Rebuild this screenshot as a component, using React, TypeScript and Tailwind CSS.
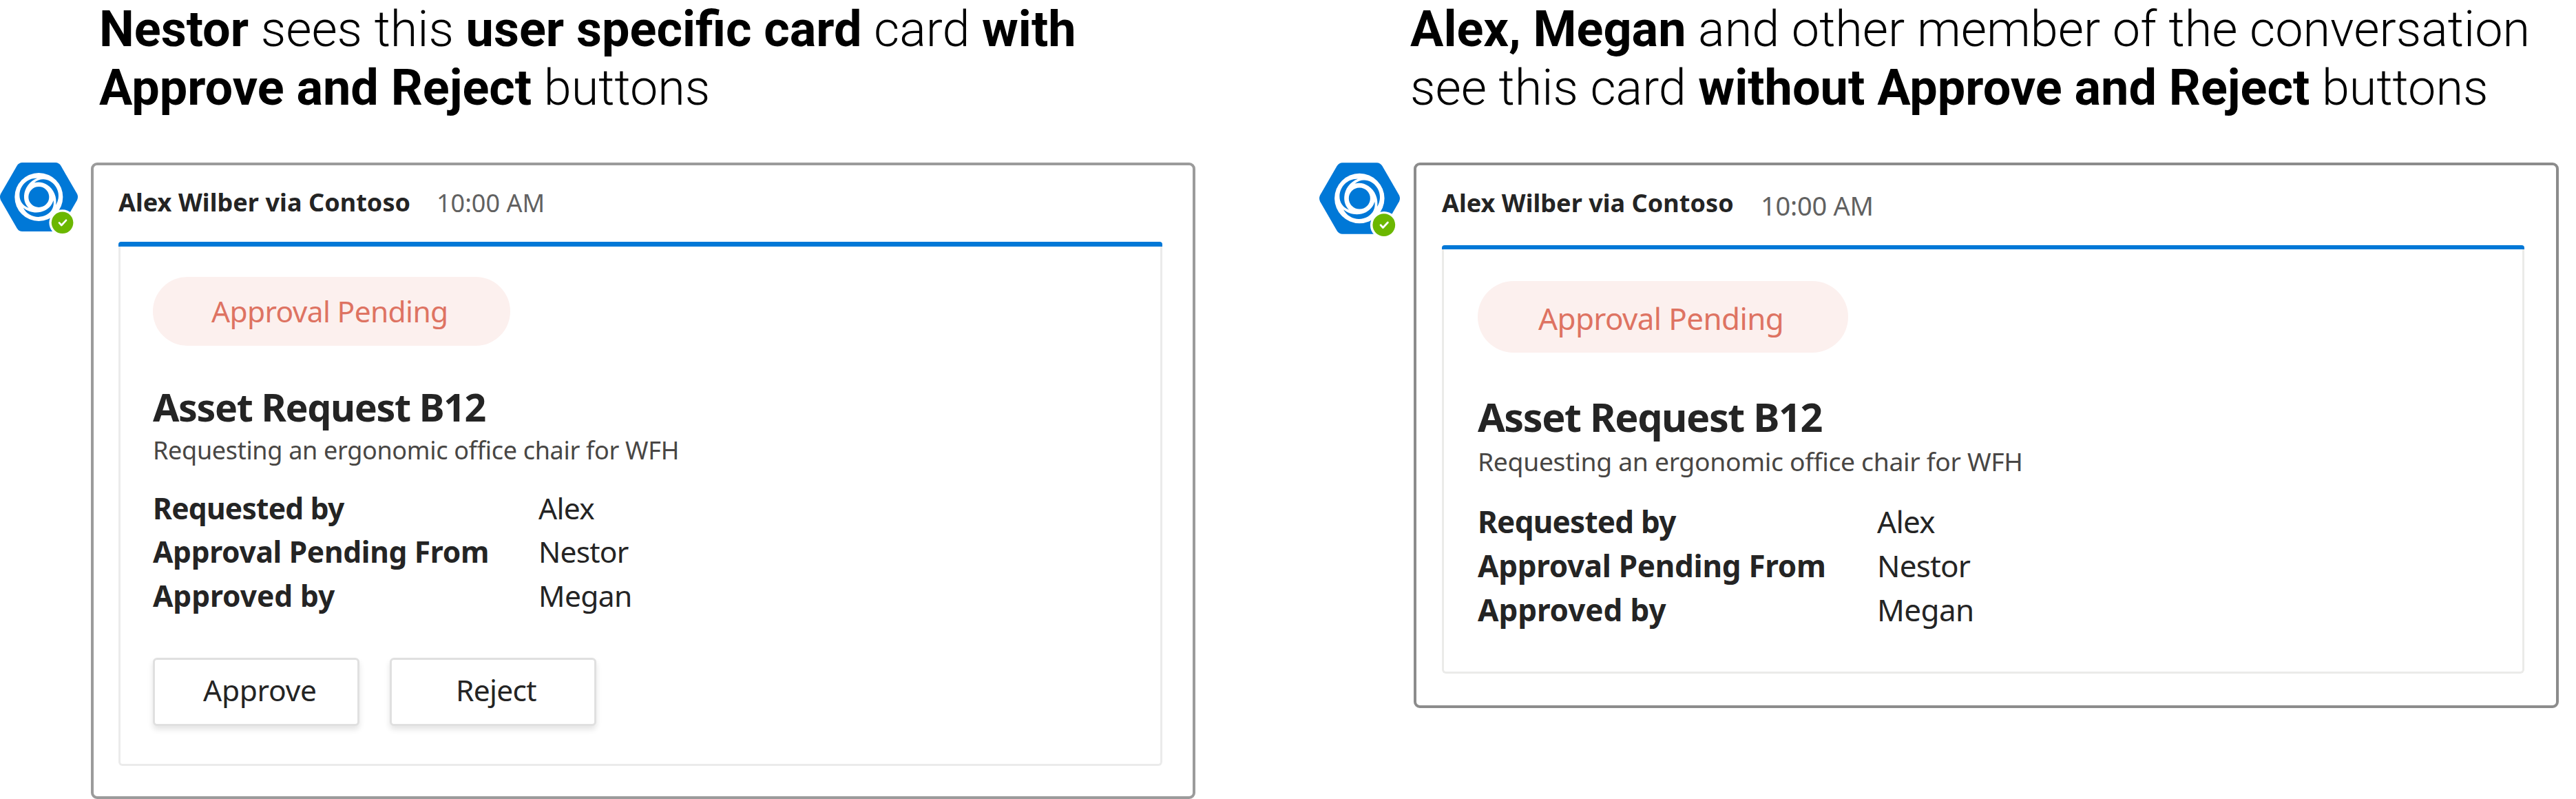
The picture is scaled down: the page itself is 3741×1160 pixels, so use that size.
type Row = { label: string; labelClass: string; value: string; valueClass: string };

const rows: Row[] = [
  { label: "Requested by", labelClass: "tracking-[-0.74px]", value: "Alex", valueClass: "tracking-[-0.7px]" },
  { label: "Approval Pending From", labelClass: "tracking-[-0.3px]", value: "Nestor", valueClass: "tracking-[-0.8px]" },
  { label: "Approved by", labelClass: "tracking-[-0.06px]", value: "Megan", valueClass: "tracking-[-0.6px]" },
];

const swirl = "M114 38C72 36 37 70 37 112C37 138 52 159 77 168C62 153 56 135 57 114C59 80 82 50 114 38Z";

function BotAvatar({ className }: { className: string }) {
  return (
    <svg className={className} viewBox="0 0 113 100" overflow="visible" fill="none">
      <path
        d="M32.5 0H80.5Q85.5 0 88.3 4.6L112 45.6Q114 50 112 54.4L88.3 95.4Q85.5 100 80.5 100H32.5Q27.5 100 24.7 95.4L1 54.4Q-1 50 1 45.6L24.7 4.6Q27.5 0 32.5 0Z"
        fill="#0078d7"
      />
      <g transform="translate(16 10) scale(0.33333)">
        <circle cx="121" cy="120" r="105" fill="#fff" />
        <circle cx="121" cy="120" r="45" fill="#0078d7" />
        <path d={swirl} fill="#0078d7" />
        <path d={swirl} fill="#0078d7" transform="rotate(120 121 120)" />
        <path d={swirl} fill="#0078d7" transform="rotate(240 121 120)" />
      </g>
      <circle cx="90.6" cy="87.5" r="19.2" fill="#fff" />
      <circle cx="90.6" cy="87.3" r="15.8" fill="#6bb700" />
      <path d="M86 87.4L89.3 91L96 83.8" stroke="#fff" strokeWidth="2.7" strokeLinecap="round" strokeLinejoin="round" />
    </svg>
  );
}

function Facts({ className, rowClass, labelClass }: { className: string; rowClass: string; labelClass: string }) {
  return (
    <dl className={className}>
      {rows.map((r) => (
        <div key={r.label} className={`flex ${rowClass}`}>
          <dt className={`shrink-0 font-bold ${labelClass} ${r.labelClass}`}>{r.label}</dt>
          <dd className={r.valueClass}>{r.value}</dd>
        </div>
      ))}
    </dl>
  );
}

function ActionButton({ label, className }: { label: string; className: string }) {
  return (
    <button
      className={`flex h-[99px] w-[300px] items-start rounded-[6px] border-[3px] border-[#e0e0e0] bg-white pt-[14px] text-[42.5px] leading-[60px] shadow-[0_5px_8px_rgba(0,0,0,0.11)] ${className}`}
    >
      {label}
    </button>
  );
}

const headingClass =
  "h-[236px] whitespace-nowrap pt-[1px] font-['Roboto',sans-serif] text-[72px] font-light leading-[84.5px] text-black";

export default function App() {
  return (
    <main className="flex h-[1160px] w-[3741px] overflow-hidden bg-white font-['Noto_Sans','Open_Sans',sans-serif] text-[#242424]">
      <section className="w-[1916px] shrink-0">
        <h2 className={`${headingClass} pl-[144px]`}>
          <b className="font-bold">Nestor</b> sees this <b className="font-bold">user specific card</b> card{" "}
          <b className="font-bold">with</b>
          <br />
          <b className="font-bold">Approve and Reject</b> buttons
        </h2>
        <div className="flex items-start gap-[19px]">
          <BotAvatar className="h-[100px] w-[113px] shrink-0 overflow-visible" />
          <article className="h-[924px] w-[1604px] rounded-[9px] border-4 border-[#9b9b9b] px-9">
            <header className="flex h-[111px] items-start whitespace-nowrap pt-[30px] text-[36px] leading-[48px]">
              <span className="w-[462px] shrink-0 font-bold tracking-[0.07px]">Alex Wilber via Contoso</span>
              <time className="pt-[1px] text-[#616161]">10:00 AM</time>
            </header>
            <div className="flex h-[761px] w-[1516px] flex-col">
              <div className="h-[7px] shrink-0 rounded-t-[4px] bg-[#0078d7]" />
              <div className="grow whitespace-nowrap rounded-b-[6px] border-x-[3px] border-b-[3px] border-[#ebebeb] pl-[47px] pt-[44px]">
                <div className="h-[100px] w-[519px] rounded-[50px] bg-[#fcf0ee] pl-[85px] pt-[19.5px] text-[42.5px] leading-[60px] tracking-[-0.65px] text-[#de7362]">
                  Approval Pending
                </div>
                <h3 className="mt-[50.5px] text-[55.5px] font-bold leading-[76px] tracking-[-1.38px]">Asset Request B12</h3>
                <p className="mt-[1px] h-[48px] text-[36px] leading-[48px] tracking-[-0.32px] text-[#484644]">
                  Requesting an ergonomic office chair for WFH
                </p>
                <Facts className="mt-[28px] text-[42.5px]" rowClass="h-[63.75px] leading-[64px]" labelClass="w-[560px]" />
                <div className="mt-[58px] flex gap-[44px]">
                  <ActionButton label="Approve" className="pl-[70px] tracking-[-0.27px]" />
                  <ActionButton label="Reject" className="pl-[93px] tracking-[-0.7px]" />
                </div>
              </div>
            </div>
          </article>
        </div>
      </section>

      <section className="w-[1825px] shrink-0">
        <h2 className={`${headingClass} pl-[132px]`}>
          <b className="font-bold">Alex, Megan</b> and other member of the conversation
          <br />
          see this card <b className="font-bold">without Approve and Reject</b> buttons
        </h2>
        <div className="flex items-start gap-[20px]">
          <BotAvatar className="h-[104px] w-[117px] shrink-0 overflow-visible" />
          <article className="h-[791.5px] w-[1662.5px] rounded-[9px] border-4 border-[#8c8c8c] px-[37px]">
            <header className="flex h-[116px] items-start whitespace-nowrap pt-[30.5px] text-[36px] leading-[48px]">
              <span className="w-[463px] shrink-0 font-bold tracking-[0.05px]">Alex Wilber via Contoso</span>
              <time className="pt-[3px] text-[38px] tracking-[-0.25px] text-[#616161]">10:00 AM</time>
            </header>
            <div className="flex h-[622px] w-[1572px] flex-col">
              <div className="h-[6px] shrink-0 rounded-t-[4px] bg-[#0078d7]" />
              <div className="grow whitespace-nowrap rounded-b-[6px] border-x-[3px] border-b-[3px] border-[#ebebe9] pl-[49px] pt-[45.5px]">
                <div className="h-[104px] w-[538px] rounded-[52px] bg-[#fcf0ee] pl-[88px] pt-[24.5px] text-[44px] leading-[60px] tracking-[-0.64px] text-[#de7362]">
                  Approval Pending
                </div>
                <h3 className="mt-[55px] text-[57.5px] font-bold leading-[76px] tracking-[-1.45px]">Asset Request B12</h3>
                <p className="mt-[3.5px] h-[47px] overflow-hidden text-[37.3px] leading-[48px] tracking-[-0.33px] text-[#484644]">
                  Requesting an ergonomic office chair for WFH
                </p>
                <Facts className="mt-[32px] text-[44px]" rowClass="h-[64px] leading-[64px]" labelClass="w-[580px]" />
              </div>
            </div>
          </article>
        </div>
      </section>
    </main>
  );
}
